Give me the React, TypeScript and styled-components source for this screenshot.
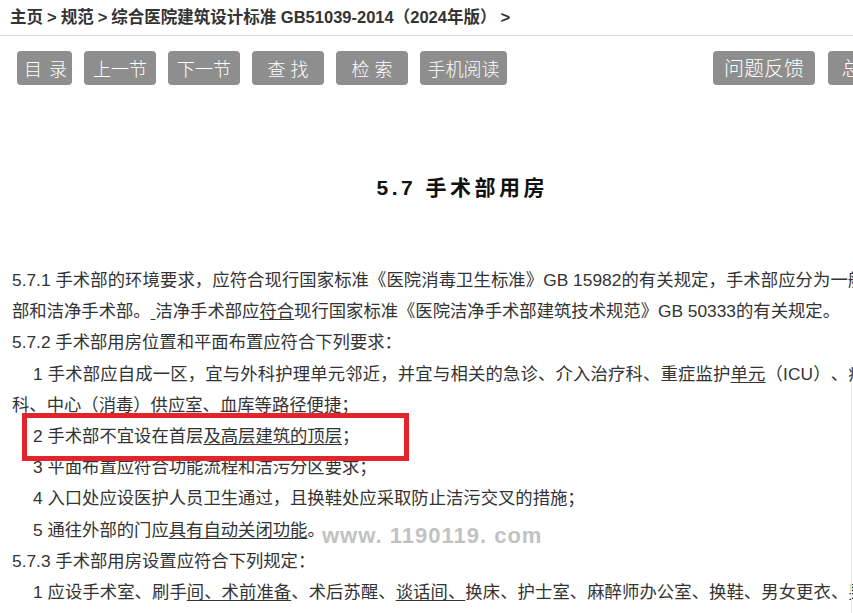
import React from "react";
import styled, { createGlobalStyle } from "styled-components";

const Global = createGlobalStyle`
  html, body {
    margin: 0;
    padding: 0;
    background: #fff;
    overflow: hidden;
  }
  body {
    font-family: "Liberation Sans", "Noto Sans CJK SC", sans-serif;
    text-spacing-trim: space-all;
  }
`;

const Page = styled.div`
  width: 921px;
`;

const Breadcrumb = styled.nav`
  height: 35px;
  line-height: 35px;
  padding-left: 10px;
  border-bottom: 1px solid #dcdcdc;
  font-size: 16.5px;
  font-weight: bold;
  color: #333;
  white-space: nowrap;
`;

const Crumb = styled.a`
  color: #333;
  text-decoration: none;
`;

const Sep = styled.span`
  margin: 0 4px;
`;

const Toolbar = styled.div`
  display: flex;
  align-items: center;
  gap: 12px;
  height: 34px;
  margin-top: 15px;
  padding: 0 6px 0 17px;
`;

const ToolGroup = styled.div`
  display: flex;
  gap: 13px;
  margin-left: auto;
`;

const ToolButton = styled.button<{ $w: number; $size?: number; $spread?: number }>`
  box-sizing: border-box;
  width: ${(p) => p.$w}px;
  height: 34px;
  margin: 0;
  border: 0;
  border-radius: 4px;
  background: #8e8e8e;
  color: #fff;
  font-family: "Noto Sans CJK SC", sans-serif;
  font-size: ${(p) => p.$size ?? 18}px;
  font-weight: 300;
  line-height: 34px;
  letter-spacing: ${(p) => p.$spread ?? 0}px;
  padding: 0 0 0 ${(p) => p.$spread ?? 0}px;
  text-align: center;
  white-space: nowrap;
  overflow: hidden;
  cursor: pointer;
`;

const Title = styled.h2`
  margin: 88px 12px 0;
  padding-left: 3.5px;
  line-height: 30px;
  font-size: 21px;
  font-weight: bold;
  letter-spacing: 3.5px;
  text-align: center;
  color: #111;
`;

const Article = styled.div`
  margin: 62px 12px 0;
  font-size: 17.33px;
  line-height: 31.2px;
  color: #333;
  text-align: justify;
`;

const Clause = styled.p`
  margin: 0 9px 0 0;
`;

const Item = styled.p`
  position: relative;
  margin: 0 26px 0 0;
  text-indent: 21px;
`;

const U = styled.span`
  text-decoration: underline;
  text-decoration-thickness: 1px;
  text-underline-offset: 2px;
`;

const Highlight = styled.span`
  position: absolute;
  z-index: 1;
  left: 10px;
  top: -8px;
  width: 387px;
  height: 48px;
  box-sizing: border-box;
  border: 5px solid #e3242b;
  pointer-events: none;
`;

const Watermark = styled.span`
  position: absolute;
  left: 310px;
  top: 10px;
  text-indent: 0;
  font-family: "Liberation Sans", sans-serif;
  font-size: 22px;
  line-height: 22px;
  font-weight: bold;
  letter-spacing: 1px;
  color: #c2c2c2;
  white-space: nowrap;
  pointer-events: none;
`;

const EdgeRule = styled.div`
  position: fixed;
  left: 851px;
  top: 383px;
  bottom: 0;
  border-left: 1px solid #ececec;
  pointer-events: none;
`;

export default function App() {
  return (
    <Page>
      <Global />
      <Breadcrumb>
        <Crumb href="#">主页</Crumb>
        <Sep>&gt;</Sep>
        <Crumb href="#">规范</Crumb>
        <Sep>&gt;</Sep>
        <Crumb href="#">综合医院建筑设计标准 GB51039-2014（2024年版）</Crumb>
        <Sep>&gt;</Sep>
      </Breadcrumb>

      <Toolbar>
        <ToolButton $w={55} $spread={7}>目录</ToolButton>
        <ToolButton $w={72}>上一节</ToolButton>
        <ToolButton $w={72}>下一节</ToolButton>
        <ToolButton $w={72} $spread={5}>查找</ToolButton>
        <ToolButton $w={72} $spread={5}>检索</ToolButton>
        <ToolButton $w={87}>手机阅读</ToolButton>
        <ToolGroup>
          <ToolButton $w={102} $size={20}>问题反馈</ToolButton>
          <ToolButton $w={87} $size={20}>总目录</ToolButton>
        </ToolGroup>
      </Toolbar>

      <Title>5.7 手术部用房</Title>

      <Article>
        <Clause>
          5.7.1 手术部的环境要求，应符合现行国家标准《医院消毒卫生标准》GB 15982的有关规定，手术部应分为一般手术部和洁净手术部。<U>{"\u00a0"}</U>洁净手术部应<U>符合</U>现行国家标准《医院洁净手术部建筑技术规范》GB 50333的有关规定。
        </Clause>
        <Clause>5.7.2 手术部用房位置和平面布置应符合下列要求：</Clause>
        <Item>
          1 手术部应自成一区，宜与外科护理单元邻近，并宜与相关的急诊、介入治疗科、重症监护<U>单元</U>（ICU）、病理科、中心（消毒）供应室、血库等路径便捷；
        </Item>
        <Item>
          2 手术部不宜设在首层<U>及高层建筑的顶层</U>；
          <Highlight />
        </Item>
        <Item>3 平面布置应符合功能流程和洁污分区要求；</Item>
        <Item>4 入口处应设医护人员卫生通过，且换鞋处应采取防止洁污交叉的措施；</Item>
        <Item>
          5 通往外部的门应<U>具有自动关闭功能</U>。
          <Watermark>www. 1190119. com</Watermark>
        </Item>
        <Clause>5.7.3 手术部用房设置应符合下列规定：</Clause>
        <Item>
          1 应设手术室、刷手<U>间、术前准备</U>、术后苏醒、<U>谈话间、</U>换床、护士室、麻醉师办公室、换鞋、男女更衣、男女卫生间、无菌物品存放、清洗、消毒、污物和库房等用房；
        </Item>
      </Article>
      <EdgeRule />
    </Page>
  );
}
